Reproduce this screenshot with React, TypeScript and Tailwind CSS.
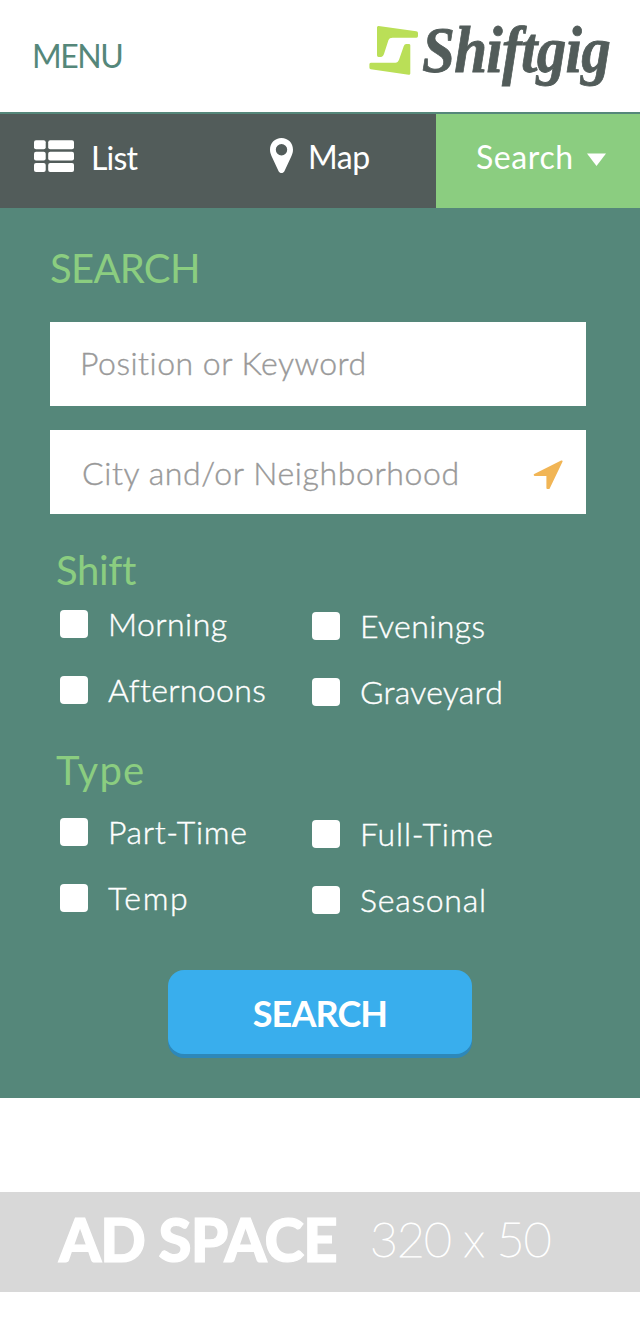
type Option = { label: string; text: string };

const shifts: Option[][] = [
  [
    { label: "Morning", text: "ml-5 tracking-[0.44px]" },
    { label: "Afternoons", text: "ml-5 tracking-[0.35px]" },
  ],
  [
    { label: "Evenings", text: "ml-5 tracking-[0.4px]" },
    { label: "Graveyard", text: "ml-5 tracking-[0.27px]" },
  ],
];

const types: Option[][] = [
  [
    { label: "Part-Time", text: "ml-5 tracking-[0.65px]" },
    { label: "Temp", text: "ml-5 tracking-[1.7px]" },
  ],
  [
    { label: "Full-Time", text: "ml-5 tracking-[0.82px]" },
    { label: "Seasonal", text: "ml-5 tracking-[0.75px]" },
  ],
];

function Logo() {
  return (
    <div className="flex">
      <svg className="mt-[25px] h-[51px] w-[50px] shrink-0" viewBox="0 0 50 51" fill="#badf57">
        <path d="M9.6 1 47.2 6.2Q49 6.5 49 8V11Q49 12.7 47.4 12.7H23.5Q20.3 12.7 19.5 15L14.9 29.2Q13.9 32 12.2 32H9.5Q8 32 8 30.3V2.6Q8 .8 9.6 1Z" />
        <path d="M41.3 20.3Q41.4 19 39.8 19H37.2Q35.5 19 34.8 21L30.2 34.3Q28.9 37.8 26.4 37.8H1.8Q.4 37.8.4 39.3V42.5Q.4 44 1.8 44.2L39.6 49.8Q41.3 50.1 41.3 48.4Z" />
      </svg>
      <div className="mt-[10px] ml-[3px] w-[192px] origin-left scale-x-[0.91] font-['Liberation_Serif',serif] text-[65px] leading-[80px] font-bold tracking-[-0.8px] whitespace-nowrap text-[#525c5a] italic [-webkit-text-stroke:0.8px_#525c5a]">
        Shiftgig
      </div>
    </div>
  );
}

function ListIcon() {
  return (
    <svg className="h-8 w-10" viewBox="0 0 40 32" fill="#fff">
      {[0.3, 11.7, 23.1].map((y) => (
        <g key={y}>
          <rect x="0" y={y} width="11.7" height="8.9" rx="2" />
          <rect x="14.2" y={y} width="25.8" height="8.9" rx="2" />
        </g>
      ))}
    </svg>
  );
}

function PinIcon() {
  return (
    <svg className="h-[35px] w-[23px]" viewBox="0 0 23 35" fill="#fff" fillRule="evenodd">
      <path d="M11.5 0C5 0 0 5 0 11.7c0 3 1.1 5.3 2.2 7.8L8.6 33.2c1.1 2.4 4.7 2.4 5.8 0l6.4-13.7c1.1-2.5 2.2-4.8 2.2-7.8C23 5 18 0 11.5 0ZM11.5 6.1a5.7 5.7 0 1 1 0 11.4a5.7 5.7 0 0 1 0-11.4Z" />
    </svg>
  );
}

function OptionGrid({ columns }: { columns: Option[][] }) {
  return (
    <div className="flex pl-[60px]">
      {columns.map((column, i) => (
        <div key={i} className={i === 0 ? "flex w-[252px] flex-col gap-[38px]" : "flex flex-col gap-[38px] pt-[2px]"}>
          {column.map((o) => (
            <label key={o.label} className="flex h-7 items-center">
              <input type="checkbox" className="size-7 shrink-0 appearance-none rounded-[4px] bg-white" />
              <span
                className={
                  "text-[32px] leading-7 font-light whitespace-nowrap text-white [-webkit-text-stroke:0.4px_#fff] " + o.text
                }
              >
                {o.label}
              </span>
            </label>
          ))}
        </div>
      ))}
    </div>
  );
}

export default function App() {
  return (
    <div className="h-[1336px] w-[640px] overflow-hidden bg-white font-['Lato',sans-serif]">
      <header className="flex h-[114px] justify-between border-b-2 border-[#55877a] pl-8">
        <div className="pt-[37px] text-[32px] leading-[38px] tracking-[-1.44px] text-[#55877a]">MENU</div>
        <div className="w-[271px]">
          <Logo />
        </div>
      </header>

      <nav className="flex h-[94px] bg-[#525c5a] text-[32px] leading-10 text-white">
        <div className="flex w-[218px] pl-[34px]">
          <div className="pt-[26px]">
            <ListIcon />
          </div>
          <span className="mt-6 ml-[17px] tracking-[-0.86px]">List</span>
        </div>
        <div className="flex w-[218px] pl-[52px]">
          <div className="pt-[24px]">
            <PinIcon />
          </div>
          <span className="mt-[23px] ml-[15px] tracking-[-0.42px]">Map</span>
        </div>
        <div className="flex w-[204px] bg-[#8bcd80] pl-10">
          <span className="mt-[23px] w-[111px] tracking-[0.6px]">Search</span>
          <svg className="mt-[39px] h-[13px] w-[19px]" viewBox="0 0 19 13" fill="#fff">
            <path d="M0 .6h19L9.5 13Z" />
          </svg>
        </div>
      </nav>

      <main className="h-[890px] bg-[#55877a] pt-[37px]">
        <h1 className="pl-[50px] text-[40px] leading-[46px] tracking-[-0.7px] text-[#8bcd80]">SEARCH</h1>
        <div className="mt-[31px] ml-[50px] flex h-[84px] w-[536px] bg-white">
          <input
            className="w-full pb-[3px] pl-[30px] text-[32px] font-light tracking-[0.5px] outline-none placeholder:text-[#999] placeholder:opacity-100 [-webkit-text-stroke:0.4px_#999]"
            placeholder="Position or Keyword"
          />
        </div>
        <div className="mt-6 ml-[50px] flex h-[84px] w-[536px] items-center bg-white">
          <input
            className="h-full w-[483px] pl-8 text-[32px] font-light tracking-[0.6px] outline-none placeholder:text-[#999] placeholder:opacity-100 [-webkit-text-stroke:0.4px_#999]"
            placeholder="City and/or Neighborhood"
          />
          <svg className="mt-[5px] h-[30px] w-[30px]" viewBox="0 0 30 30" fill="#f1b555" stroke="#f1b555" strokeWidth="2" strokeLinejoin="round">
            <path d="M28.6 1.4 1.7 14.9H14.4V28H15.8Z" />
          </svg>
        </div>

        <h2 className="mt-[33px] pl-[56px] text-[40px] leading-[46px] font-normal tracking-[-0.32px] text-[#8bcd80]">Shift</h2>
        <div className="pt-[17px]">
          <OptionGrid columns={shifts} />
        </div>
        <h2 className="mt-[41px] pl-[56px] text-[40px] leading-[46px] font-normal tracking-[1.3px] text-[#8bcd80]">Type</h2>
        <div className="pt-[25px]">
          <OptionGrid columns={types} />
        </div>

        <button className="mx-auto mt-14 block h-[84px] w-[304px] rounded-2xl bg-[#39aeed] pt-px text-[36px] font-bold tracking-[-0.89px] text-white shadow-[0_4px_0_#2e88b9]">
          SEARCH
        </button>
      </main>

      <footer className="mt-[94px] flex h-[100px] bg-[#d8d8d8] pl-[59px] text-white">
        <span className="w-[311px] pt-[9px] text-[60px] leading-[76px] font-black tracking-[-0.83px] whitespace-nowrap [-webkit-text-stroke:1.2px_#fff]">
          AD SPACE
        </span>
        <span className="pt-[9px] text-[48px] leading-[76px] font-thin tracking-[-0.9px] whitespace-nowrap [-webkit-text-stroke:0.9px_#fff]">
          320 x 50
        </span>
      </footer>
    </div>
  );
}
